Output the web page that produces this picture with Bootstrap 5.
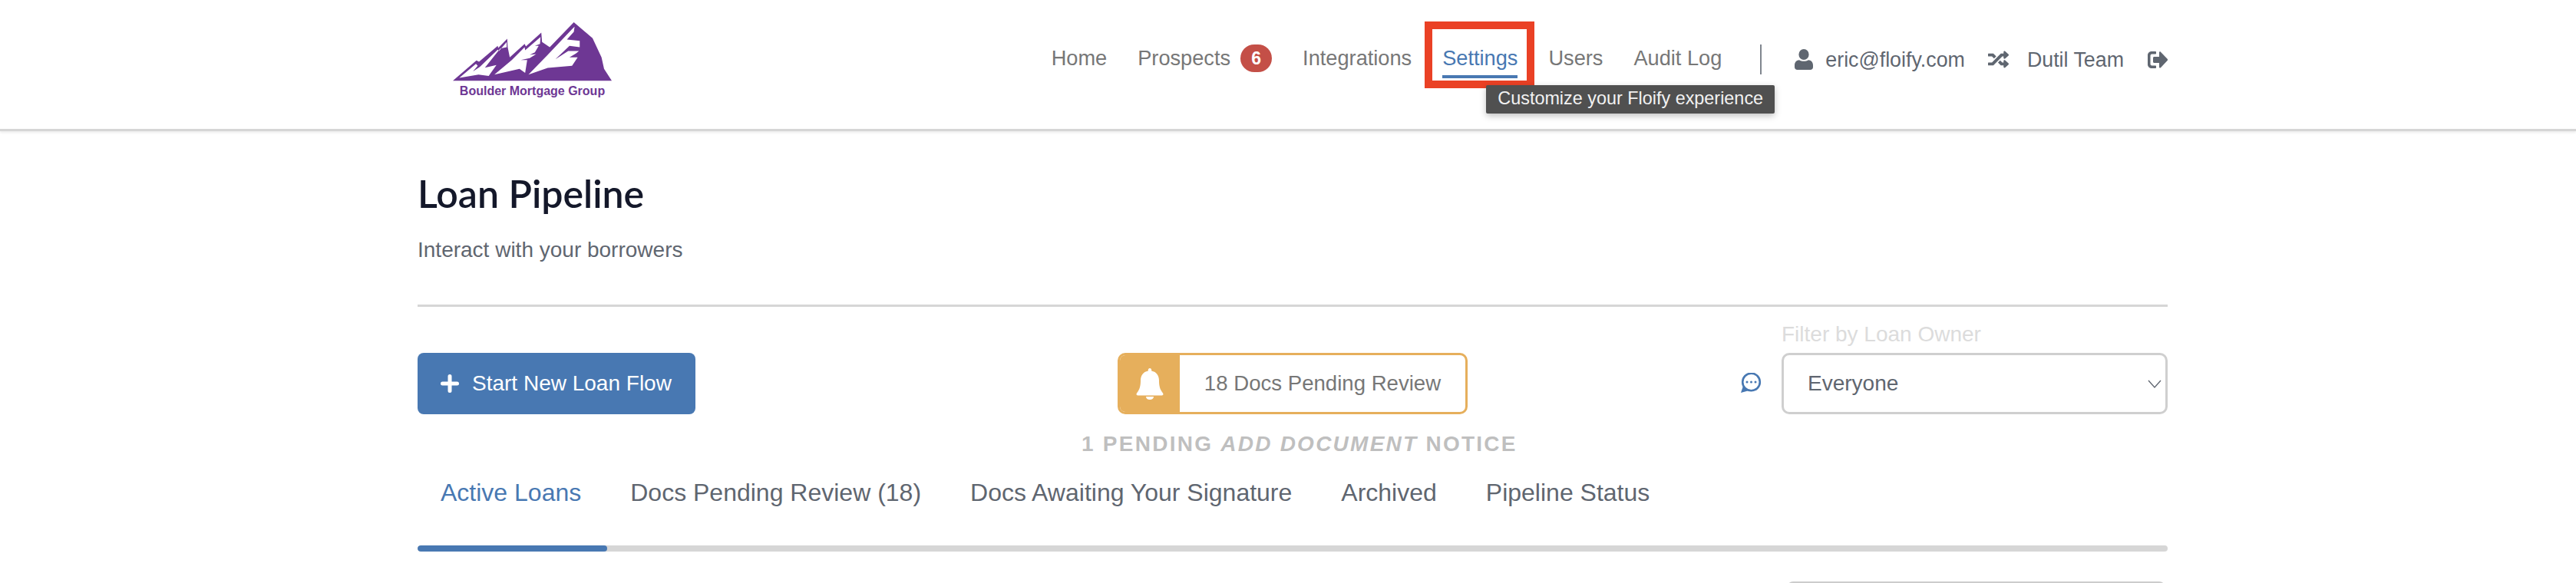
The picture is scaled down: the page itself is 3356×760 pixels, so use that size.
<!DOCTYPE html>
<html lang="en">
<head>
  <meta charset="UTF-8" />
  <title>Loan Pipeline</title>
  <link href="https://cdn.jsdelivr.net/npm/bootstrap@5.3.6/dist/css/bootstrap.min.css" rel="stylesheet"/>
  <style>
    html, body { height: 760px; overflow: hidden; }
    body { background: #fff; font-family: "Liberation Sans", Arial, sans-serif; font-size: 27.2px; color: #5f6670; }

    /* header */
    .top-head { height: 171px; border-bottom: 3px solid #d6d6d6; box-shadow: 0 2px 3px rgba(0,0,0,.08); }
    .page-wrap { margin-left: 544px; width: 2280px; }
    .logo-box { margin-left: 46px; padding-top: 29px; width: 207px; }
    .logo-box svg { display: block; width: 207px; height: 77px; }
    .logo-name { font-size: 16px; line-height: 20px; margin-top: 3px; font-weight: 700; color: #6e3794; text-align: center; white-space: nowrap; }
    .main-links { gap: 40px; padding-top: 58px; line-height: 36px; height: 105px; }
    .main-links a { color: #777; text-decoration: none; display: block; white-space: nowrap; }
    .main-links a.on { color: #4878b2; border-bottom: 4px solid #4878b2; height: 44px; }
    .count-pill { display: inline-block; width: 41px; height: 36px; margin-left: 13px; border-radius: 18px; background: #c44f47; color: #fff; font-size: 23px; font-weight: 700; line-height: 36px; text-align: center; vertical-align: top; }
    .settings-item { position: relative; }
    .red-mark { position: absolute; left: -23px; top: -30px; width: 143px; height: 87px; border: solid #ea4125; border-width: 10px; pointer-events: none; }
    .hint-tip { position: absolute; left: 57px; top: 53px; width: 376px; height: 37px; background: #505050; color: #f2f2f2; font-size: 23.4px; line-height: 35px; text-align: center; border-radius: 2px; white-space: nowrap; box-shadow: 0 3px 8px rgba(0,0,0,.25); z-index: 5; }
    .user-links { margin-left: 10px; height: 39px; border-left: 2px solid #80868e; padding-left: 43px; color: #5f6670; white-space: nowrap; font-size: 26.8px; line-height: 36px; }
    .user-links svg { fill: #5f6670; display: block; }
    .shuffle-ico { margin: 0 24px 0 30px; }
    .leave-ico { margin-left: 31px; }

    /* page head */
    .page-title { font-family: "Lato", sans-serif; font-size: 50px; font-weight: 600; line-height: 58px; color: #14182a; margin: 52px 0 0; }
    .page-sub { font-size: 28px; line-height: 32px; margin: 29px 0 0; }
    .head-rule { height: 3px; background: #d6d6d6; margin-top: 55px; }

    /* actions */
    .page-body { height: 589px; overflow: hidden; }
    .action-grid { display: grid; grid-template-columns: 865px 564px 1fr; margin-top: 18px; }
    .pad-down { padding-top: 42px; }
    .btn.start-btn { width: 362px; height: 80px; background: #4878b2; border: 0; border-radius: 8px; color: #fff; font-size: 28px; display: flex; align-items: center; padding: 0 0 0 30px; gap: 17px; white-space: nowrap; }
    .pending-box { width: 456px; height: 80px; margin-left: 47px; border: 3px solid #e6af5c; border-radius: 10px; overflow: hidden; color: #777; font-size: 27.6px; }
    .bell-part { width: 78px; background: #e6af5c; }
    .notice-line { margin-top: 26px; font-size: 28px; line-height: 26px; font-weight: 700; letter-spacing: 2.25px; color: #bfbfbf; text-align: center; white-space: nowrap; }
    .owner-side { width: 503px; }
    .owner-label { font-size: 28px; line-height: 36px; margin-bottom: 6px; color: #dcdcdc; white-space: nowrap; }
    .form-select.owner-pick { height: 80px; border: 3px solid #cfcfcf; border-radius: 10px; font-size: 28px; color: #5f6670; padding: 0 40px 0 31px; box-shadow: none;
      background-image: url("data:image/svg+xml,%3csvg xmlns='http://www.w3.org/2000/svg' viewBox='0 0 18 11'%3e%3cpath fill='none' stroke='%235f6670' stroke-width='1.3' d='M1 1l8 9 8-9'/%3e%3c/svg%3e");
      background-size: 18px 11px; background-position: right 5px center; }
    .chat-side { padding: 68px 26px 0 0; }

    /* tabs */
    .tab-row { gap: 64px; padding-left: 30px; margin-top: 30px; font-size: 32px; line-height: 40px; white-space: nowrap; }
    .tab-row a { color: #5f6670; text-decoration: none; }
    .tab-row a.on { color: #4878b2; }
    .tab-track { height: 8px; background: #d6d6d6; border-radius: 4px; margin-top: 49px; overflow: hidden; }
    .tab-fill { height: 8px; width: 247px; background: #4878b2; border-radius: 4px; }
    .search-stub { width: 493px; height: 60px; margin: 39px 3px 0 auto; border: 2px solid #ccc; border-radius: 8px; }
  </style>
</head>
<body>

<header class="top-head">
  <div class="page-wrap d-flex justify-content-between">
    <div class="logo-box">
      <svg viewBox="270 88 620 230" aria-hidden="true">
        <path fill="#6e3794" d="M270 316L362 237L372 242L445 180L447 188L482 152L484 185L492 225L550 172L555 182L615 128L618 165L648 185L742 88L815 150L850 225L860 270L890 316Z"/>
        <path fill="#fff" d="M565 292L640 215L735 115L745 105L742 125L715 155L765 160L765 185L725 180L670 232L720 200L762 200L750 210L725 225L757 225L735 258L640 266Z"/>
        <path fill="#fff" d="M432 292L500 235L550 185L552 197L612 145L610 172L590 180L605 180L590 205L570 215L595 212L570 228L535 235L560 235L552 285L530 270Z"/>
        <path fill="#fff" d="M295 305L360 250L367 258L348 280L375 262L445 195L450 200L480 165L480 185L455 190L435 215L395 265L440 255L415 290L410 297L370 292Z"/>
      </svg>
      <div class="logo-name">Boulder Mortgage Group</div>
    </div>

    <nav class="main-links d-flex align-items-start">
      <a href="#">Home</a>
      <a href="#">Prospects<span class="count-pill">6</span></a>
      <a href="#">Integrations</a>
      <div class="settings-item">
        <a href="#" class="on">Settings</a>
        <div class="red-mark"></div>
        <div class="hint-tip">Customize your Floify experience</div>
      </div>
      <a href="#">Users</a>
      <a href="#">Audit Log</a>
      <div class="user-links d-flex align-items-center">
        <svg width="24" height="27" viewBox="0 0 24 27" class="me-3">
          <ellipse cx="12" cy="7" rx="6.6" ry="7"/>
          <path d="M0 21c0-4.5 3-6.5 6-6.8 3.5 2.2 8.5 2.2 12 0 3 .3 6 2.300 6 6.800v2.500c0 2-1.500 3.500-3.500 3.500h-17C1.500 27 0 25.500 0 23.500z"/>
        </svg>
        <span>eric@floify.com</span>
        <svg class="shuffle-ico" width="27" height="25" viewBox="0 0 512 512" preserveAspectRatio="none">
          <path d="M504.971 359.029c9.373 9.373 9.373 24.569 0 33.941l-80 79.984c-15.01 15.01-40.971 4.49-40.971-16.971V416h-58.785a12.004 12.004 0 0 1-8.773-3.812l-70.556-75.596 53.333-57.143L352 336h32v-39.981c0-21.438 25.943-31.998 40.971-16.971l80 79.981zM12 176h84l52.781 56.551 53.333-57.143-70.556-75.596A11.999 11.999 0 0 0 122.785 96H12c-6.627 0-12 5.373-12 12v56c0 6.627 5.373 12 12 12zm372 0v39.984c0 21.46 25.961 31.98 40.971 16.971l80-79.984c9.373-9.373 9.373-24.569 0-33.941l-80-79.981C409.943 24.021 384 34.582 384 56.019V96h-58.785a12.004 12.004 0 0 0-8.773 3.812L96 336H12c-6.627 0-12 5.373-12 12v56c0 6.627 5.373 12 12 12h110.785c3.326 0 6.503-1.381 8.773-3.812L352 176h32z"/>
        </svg>
        <span>Dutil Team</span>
        <svg class="leave-ico" width="26" height="22" viewBox="0 0 26 22">
          <path d="M5 0h5c.6 0 1 .4 1 1v1.500c0 .6-.4 1-1 1H5.500C4.400 3.500 3.500 4.400 3.500 5.500v11c0 1.100.9 2 2 2H10c.6 0 1 .4 1 1V21c0 .6-.4 1-1 1H5c-2.800 0-5-2.200-5-5V5c0-2.800 2.200-5 5-5z"/>
          <path d="M15 1.500c0-1 1.200-1.500 1.900-.8l8.700 9.100c.6.600.6 1.600 0 2.200l-8.700 9.200c-.7.700-1.900.2-1.900-.8V15H8.500C7.700 15 7 14.300 7 13.500v-5C7 7.700 7.700 7 8.500 7H15z"/>
        </svg>
      </div>
    </nav>
  </div>
</header>

<main class="page-wrap page-body">
  <h1 class="page-title">Loan Pipeline</h1>
  <p class="page-sub">Interact with your borrowers</p>
  <div class="head-rule"></div>

  <div class="action-grid">
    <div class="pad-down">
      <button class="btn start-btn" type="button">
        <svg width="24" height="24" viewBox="0 0 24 24"><path fill="none" stroke="#fff" stroke-width="5" stroke-linecap="round" d="M12 2.500v19M2.500 12h19"/></svg>
        Start New Loan Flow
      </button>
    </div>

    <div class="pad-down">
      <div class="pending-box d-flex">
        <div class="bell-part d-flex align-items-center justify-content-center">
          <svg width="36" height="41" viewBox="0 0 36 41"><path fill="#fff" d="M18 0c1.300 0 2.200 1 2.200 2.300v1.200C27 4.700 30 10 30 16c0 8 1.500 12 5 16.500 1 1.300.3 3-1.300 3H2.300C.7 35.500 0 33.800 1 32.500 4.500 28 6 24 6 16 6 10 9 4.700 15.800 3.500V2.300C15.800 1 16.700 0 18 0zM13 37h10c0 2.500-2.200 4-5 4s-5-1.500-5-4z"/></svg>
        </div>
        <div class="flex-grow-1 d-flex align-items-center justify-content-center">18 Docs Pending Review</div>
      </div>
      <div class="notice-line">1 PENDING <em>ADD DOCUMENT</em> NOTICE</div>
    </div>

    <div class="d-flex justify-content-end">
      <div class="chat-side align-self-start">
        <svg class="d-block" width="28" height="26" viewBox="0 0 28 26"><circle cx="14.500" cy="12" r="11.300" fill="none" stroke="#4878b2" stroke-width="2.600"/><path fill="#4878b2" d="M1 26l3-9 6 6.500z"/><circle cx="9" cy="12" r="1.500" fill="#4878b2"/><circle cx="14.500" cy="12" r="1.500" fill="#4878b2"/><circle cx="20" cy="12" r="1.500" fill="#4878b2"/></svg>
      </div>
      <div class="owner-side">
        <div class="owner-label">Filter by Loan Owner</div>
        <select class="form-select owner-pick"><option>Everyone</option></select>
      </div>
    </div>
  </div>

  <div class="tab-row d-flex">
    <a href="#" class="on">Active Loans</a>
    <a href="#">Docs Pending Review (18)</a>
    <a href="#">Docs Awaiting Your Signature</a>
    <a href="#">Archived</a>
    <a href="#">Pipeline Status</a>
  </div>
  <div class="tab-track"><div class="tab-fill"></div></div>
  <div class="search-stub"></div>
</main>

<script src="https://cdn.jsdelivr.net/npm/bootstrap@5.3.6/dist/js/bootstrap.bundle.min.js"></script>
</body>
</html>
